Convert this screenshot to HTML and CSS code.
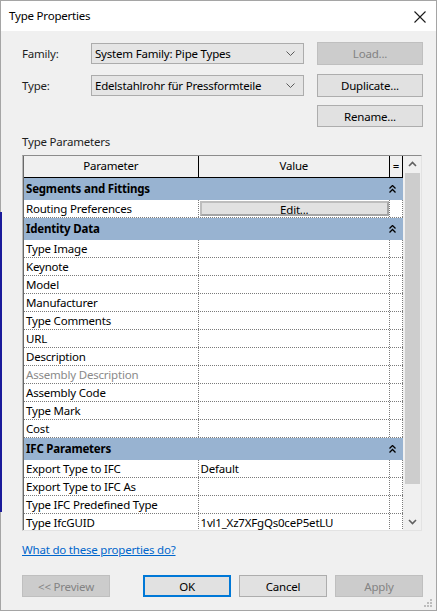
FILE: index.html
```html
<!DOCTYPE html>
<html lang="en">

<head>
    <meta charset="UTF-8">
    <meta name="viewport" content="width=device-width, initial-scale=1.0">
    <title>Type Properties</title>
    <link rel="stylesheet" href="styles.css">
</head>

<body>
    <div class="window">
        <div class="title-bar">
            <span class="title">Type Properties</span>
            <svg class="close" width="12" height="12" viewBox="0 0 12 12">
                <path d="M0.5 0.5 L11.5 11.5 M11.5 0.5 L0.5 11.5" stroke="#1a1a1a" stroke-width="1.1" fill="none"/>
            </svg>
        </div>

        <div class="content">
            <!-- Family / type pickers -->
            <div class="type-form">
                <span class="field-label">Family:</span>
                <div class="combo">
                    <span>System Family: Pipe Types</span>
                    <svg class="chevron" width="9" height="5" viewBox="0 0 9 5"><path d="M0.5 0.5 L4.5 4.5 L8.5 0.5" stroke="#5a5a5a" fill="none"/></svg>
                </div>
                <button type="button" class="btn disabled">Load...</button>

                <span class="field-label">Type:</span>
                <div class="combo">
                    <span>Edelstahlrohr für Pressformteile</span>
                    <svg class="chevron" width="9" height="5" viewBox="0 0 9 5"><path d="M0.5 0.5 L4.5 4.5 L8.5 0.5" stroke="#5a5a5a" fill="none"/></svg>
                </div>
                <button type="button" class="btn">Duplicate...</button>

                <button type="button" class="btn rename">Rename...</button>
            </div>

            <div class="group-label">Type Parameters</div>

            <!-- Parameter grid -->
            <div class="grid-frame">
                <div class="grid">
                    <div class="row header">
                        <div class="cell name">Parameter</div>
                        <div class="cell value">Value</div>
                        <div class="cell eq">=</div>
                    </div>

                    <div class="row section">
                        <span>Segments and Fittings</span>
                        <svg class="collapse" width="7" height="8" viewBox="0 0 7 8"><path d="M0.5 3.5 L3.5 0.5 L6.5 3.5 M0.5 7.5 L3.5 4.5 L6.5 7.5" stroke="#000" stroke-width="1.3" fill="none"/></svg>
                    </div>
                    <div class="row">
                        <div class="cell name">Routing Preferences</div>
                        <div class="cell value"><div class="edit-btn">Edit...</div></div>
                        <div class="cell eq"></div>
                    </div>

                    <div class="row section">
                        <span>Identity Data</span>
                        <svg class="collapse" width="7" height="8" viewBox="0 0 7 8"><path d="M0.5 3.5 L3.5 0.5 L6.5 3.5 M0.5 7.5 L3.5 4.5 L6.5 7.5" stroke="#000" stroke-width="1.3" fill="none"/></svg>
                    </div>
                    <div class="row"><div class="cell name">Type Image</div><div class="cell value"></div><div class="cell eq"></div></div>
                    <div class="row"><div class="cell name">Keynote</div><div class="cell value"></div><div class="cell eq"></div></div>
                    <div class="row"><div class="cell name">Model</div><div class="cell value"></div><div class="cell eq"></div></div>
                    <div class="row"><div class="cell name">Manufacturer</div><div class="cell value"></div><div class="cell eq"></div></div>
                    <div class="row"><div class="cell name">Type Comments</div><div class="cell value"></div><div class="cell eq"></div></div>
                    <div class="row"><div class="cell name">URL</div><div class="cell value"></div><div class="cell eq"></div></div>
                    <div class="row"><div class="cell name">Description</div><div class="cell value"></div><div class="cell eq"></div></div>
                    <div class="row"><div class="cell name muted">Assembly Description</div><div class="cell value"></div><div class="cell eq"></div></div>
                    <div class="row"><div class="cell name">Assembly Code</div><div class="cell value"></div><div class="cell eq"></div></div>
                    <div class="row"><div class="cell name">Type Mark</div><div class="cell value"></div><div class="cell eq"></div></div>
                    <div class="row"><div class="cell name">Cost</div><div class="cell value"></div><div class="cell eq"></div></div>

                    <div class="row section">
                        <span>IFC Parameters</span>
                        <svg class="collapse" width="7" height="8" viewBox="0 0 7 8"><path d="M0.5 3.5 L3.5 0.5 L6.5 3.5 M0.5 7.5 L3.5 4.5 L6.5 7.5" stroke="#000" stroke-width="1.3" fill="none"/></svg>
                    </div>
                    <div class="row"><div class="cell name">Export Type to IFC</div><div class="cell value">Default</div><div class="cell eq"></div></div>
                    <div class="row"><div class="cell name">Export Type to IFC As</div><div class="cell value"></div><div class="cell eq"></div></div>
                    <div class="row"><div class="cell name">Type IFC Predefined Type</div><div class="cell value"></div><div class="cell eq"></div></div>
                    <div class="row"><div class="cell name">Type IfcGUID</div><div class="cell value">1vl1_Xz7XFgQs0ceP5etLU</div><div class="cell eq"></div></div>
                </div>

                <div class="scrollbar">
                    <svg class="arrow" width="17" height="17" viewBox="0 0 17 17"><path d="M5 10 L8.5 6.5 L12 10" stroke="#606060" stroke-width="1.6" fill="none"/></svg>
                    <div class="thumb"></div>
                    <div class="track"></div>
                    <svg class="arrow" width="17" height="17" viewBox="0 0 17 17"><path d="M5 7 L8.5 10.5 L12 7" stroke="#606060" stroke-width="1.6" fill="none"/></svg>
                </div>
            </div>

            <a class="help-link" href="#">What do these properties do?</a>

            <div class="dialog-buttons">
                <button type="button" class="btn disabled">&lt;&lt; Preview</button>
                <button type="button" class="btn default">OK</button>
                <button type="button" class="btn">Cancel</button>
                <button type="button" class="btn disabled">Apply</button>
            </div>
        </div>

        <svg class="grip" width="9" height="9" viewBox="0 0 9 9">
            <rect x="6" y="0" width="2" height="2" fill="#bdbdbd"/>
            <rect x="3" y="3" width="2" height="2" fill="#bdbdbd"/>
            <rect x="6" y="3" width="2" height="2" fill="#bdbdbd"/>
            <rect x="0" y="6" width="2" height="2" fill="#bdbdbd"/>
            <rect x="3" y="6" width="2" height="2" fill="#bdbdbd"/>
            <rect x="6" y="6" width="2" height="2" fill="#bdbdbd"/>
        </svg>

        <div class="edge-mark"></div>
    </div>
</body>

</html>
```

FILE: styles.css
```css
body {
    margin: 0;
    padding: 0;
    font-family: "Noto Sans", Arial, sans-serif;
    font-size: 11.5px;
    letter-spacing: -0.2px;
    color: #000000;
    background-color: #ffffff;
}

.window {
    position: relative;
    width: 437px;
    height: 611px;
    box-sizing: border-box;
    border: 1px solid #a5a5a5;
    background-color: #f0f0f0;
    display: flex;
    flex-direction: column;
}

.title-bar {
    height: 30px;
    background-color: #ffffff;
    display: flex;
    align-items: center;
    justify-content: space-between;
    padding: 0 10px 0 8px;
}

.title {
    font-size: 11.5px;
    color: #000000;
    margin-top: -1px;
}

.close {
    margin-top: 1px;
}

.content {
    padding: 11px 13px 0 21px;
}

/* Family / Type pickers */
.type-form {
    display: grid;
    grid-template-columns: 69px 226px 106px;
    grid-template-rows: 23px 23px 22px;
    row-gap: 9px;
    align-items: center;
}

.field-label {
    color: #1e1e1e;
}

.combo {
    width: 213px;
    height: 21px;
    box-sizing: border-box;
    border: 1px solid #acacac;
    background-color: #e5e5e5;
    display: flex;
    align-items: center;
    justify-content: space-between;
    padding: 0 8px 0 3px;
}

.btn {
    font-family: "Noto Sans", Arial, sans-serif;
    font-size: 11.5px;
    letter-spacing: -0.2px;
    color: #000000;
    height: 23px;
    box-sizing: border-box;
    border: 1px solid #adadad;
    background-color: #e1e1e1;
    padding: 0;
}

.btn.disabled {
    background-color: #cccccc;
    border-color: #bfbfbf;
    color: #838383;
}

.btn.default {
    border: 2px solid #0078d7;
}

.rename {
    grid-column: 3;
    height: 22px;
    margin-top: -2px;
}

.group-label {
    margin-top: 6px;
    line-height: 16px;
    color: #1e1e1e;
}

/* Parameter grid */
.grid-frame {
    margin-top: 5px;
    width: 400px;
    height: 376px;
    box-sizing: border-box;
    border-top: 1px solid #8c8c8c;
    border-left: 1px solid #b9b9b9;
    border-right: 1px solid #e3e3e3;
    border-bottom: 1px solid #e3e3e3;
    display: flex;
    overflow: hidden;
}

.grid {
    width: 380px;
    border-left: 1px solid #696969;
    background-color: #ffffff;
    overflow: hidden;
}

.row {
    display: flex;
    height: 18px;
    box-sizing: border-box;
    border-bottom: 1px dotted #7a7a7a;
    line-height: 17px;
}

.cell {
    box-sizing: border-box;
    white-space: nowrap;
    overflow: hidden;
}

.cell.name {
    width: 175px;
    padding-left: 2px;
    border-right: 1px dotted #7a7a7a;
}

.cell.value {
    width: 192px;
    padding-left: 2px;
    border-right: 1px dotted #7a7a7a;
}

.cell.eq {
    width: 13px;
    border-right: 1px dotted #7a7a7a;
}

.cell.name.muted {
    color: #8a8a8a;
}

.row.header {
    height: 22px;
    line-height: 20px;
    background-color: #f0f0f0;
    border-bottom: 1px solid #000000;
}

.row.header .cell {
    text-align: center;
    border-right: 1px solid #000000;
}

.row.header .cell.name,
.row.header .cell.value {
    padding-left: 0;
}

.row.section {
    height: 22px;
    line-height: 22px;
    border-bottom: none;
    background-color: #98b3d1;
    font-weight: bold;
    justify-content: space-between;
    align-items: center;
    padding: 0 7px 0 2px;
}

.edit-btn {
    margin: 1px 0 0 -1px;
    height: 15px;
    line-height: 14px;
    box-sizing: border-box;
    border: 2px solid #a5a5a5;
    border-top-color: #bdbdbd;
    border-left-color: #bdbdbd;
    background-color: #e1e1e1;
    text-align: center;
}

.scrollbar {
    width: 17px;
    margin-left: 1px;
    display: flex;
    flex-direction: column;
    background-color: #f0f0f0;
}

.arrow {
    flex: none;
}

.thumb {
    flex: none;
    height: 311px;
    margin: 0 1px 0 1px;
    background-color: #cdcdcd;
}

.track {
    flex: 1;
}

.help-link {
    display: block;
    margin-top: 11px;
    line-height: 16px;
    width: fit-content;
    color: #0066cc;
    text-decoration: underline;
}

.dialog-buttons {
    margin-top: 17px;
    display: flex;
    gap: 8px;
}

.dialog-buttons .btn {
    width: 88px;
    height: 22px;
}

.dialog-buttons .btn.default {
    margin-left: 25px;
}

.grip {
    position: absolute;
    right: 3px;
    bottom: 2px;
}

.edge-mark {
    position: absolute;
    left: -1px;
    top: 211px;
    width: 2px;
    height: 300px;
    background-color: #1a1a9a;
}
```
